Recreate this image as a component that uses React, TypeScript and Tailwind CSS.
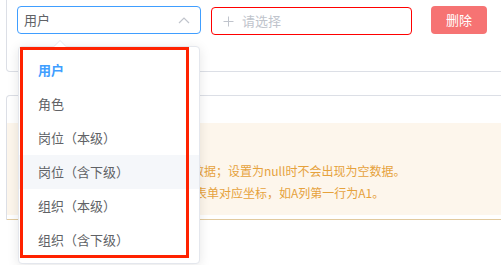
import React from "react";

const options = ["用户", "角色", "岗位（本级）", "岗位（含下级）", "组织（本级）", "组织（含下级）"];

const App = () => {
  return (
    <div className="relative h-[265px] w-full overflow-hidden bg-white font-['Noto_Sans_CJK_SC','Noto_Sans',sans-serif] text-[13px]">
      <div className="ml-[6px] w-[560px] rounded-b-[4px] border-x border-b border-[#dcdfe6] pb-[36px] pl-[10px] pt-[5px]">
        <div className="flex items-center">
          <div className="relative">
            <div className="flex h-[28px] w-[184px] items-center justify-between rounded-[4px] border border-[#409eff] pl-[6px] pr-[10px] text-[#606266]">
              <span>用户</span>
              <svg width="12" height="7" viewBox="0 0 12 7" fill="none">
                <polyline points="1,6 6,1 11,6" stroke="#c0c4cc" strokeWidth="1.2" />
              </svg>
            </div>

            <div className="absolute left-[1px] top-[40px] z-10 w-[182px] rounded-[4px] border border-[#e4e7ed] bg-white py-[6px] shadow-[0_2px_12px_0_rgba(0,0,0,0.1)]">
              <svg className="absolute left-[34px] top-[-7px]" width="14" height="8" viewBox="0 0 14 8">
                <polygon points="0,7.5 7,0.5 14,7.5" fill="white" stroke="#e4e7ed" strokeWidth="1" />
                <rect x="0" y="7" width="14" height="1.5" fill="white" />
              </svg>
              {options.map((o, i) => (
                <div
                  key={o}
                  className={
                    i === 0
                      ? "h-[34px] px-[19px] font-bold leading-[34px] text-[#409eff]"
                      : i === 3
                      ? "h-[34px] bg-[#f5f7fa] px-[19px] leading-[34px] text-[#606266]"
                      : "h-[34px] px-[19px] leading-[34px] text-[#606266]"
                  }
                >
                  {o}
                </div>
              ))}
              <div className="absolute left-[1px] top-0 h-[211px] w-[169px] border-[3px] border-[#ff2200]" />
            </div>
          </div>

          <div className="ml-[10px] mt-[2px] flex h-[28px] w-[201px] items-center rounded-[4px] border border-[#ff0000] pl-[11px] text-[#c0c4cc]">
            <svg width="11" height="11" viewBox="0 0 11 11">
              <path d="M5.5 0.5V10.5M0.5 5.5H10.5" stroke="#c0c4cc" strokeWidth="1" />
            </svg>
            <span className="ml-[8px]">请选择</span>
          </div>

          <button className="ml-[19px] h-[28px] w-[56px] rounded-[4px] bg-[#f67373] text-[13px] text-white">
            删除
          </button>
        </div>
      </div>

      <div className="ml-[6px] mt-[23px] w-[560px] rounded-t-[4px] border-x border-t border-[#dcdfe6] pt-[27px]">
        <div className="h-[92px] bg-[#fdf6ec] pl-[29px] pt-[15px] text-[12px] leading-[22px] text-[#e6a23c]">
          <div>说明：导入规则。</div>
          <div>设置为空字符串时会出现为空数据；设置为null时不会出现为空数据。</div>
          <div className="pl-[3px]">填写的单元格坐标须与所导入表单对应坐标，如A列第一行为A1。</div>
        </div>
        <div className="mt-[4px] h-px bg-[#e2ca9e]" />
      </div>
    </div>
  );
};

export default App;
